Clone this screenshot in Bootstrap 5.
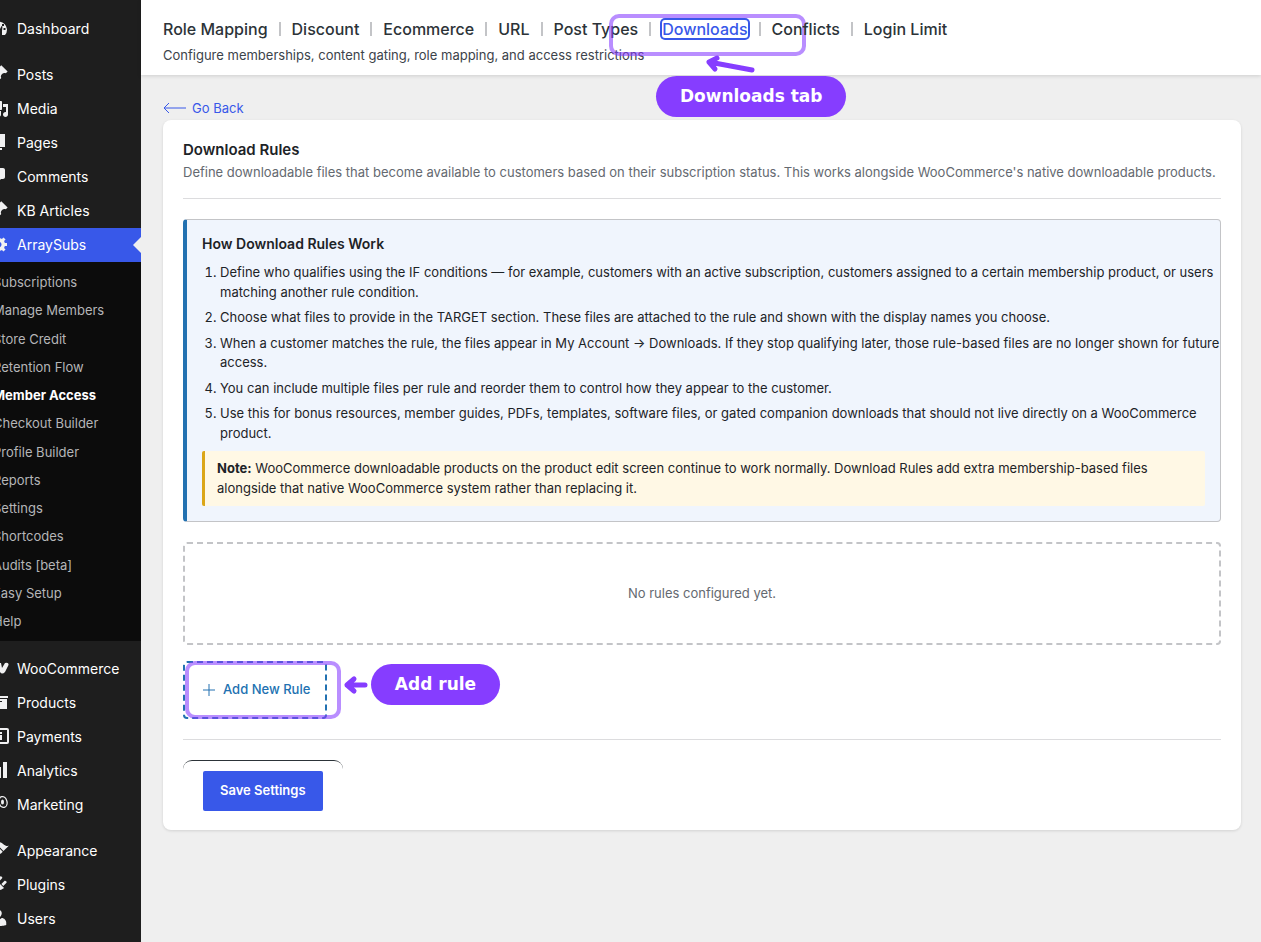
<!DOCTYPE html>
<html lang="en">
<head>
<meta charset="utf-8">
<meta name="viewport" content="width=device-width, initial-scale=1">
<title>Download Rules</title>
<link href="https://cdn.jsdelivr.net/npm/bootstrap@5.3.0/dist/css/bootstrap.min.css" rel="stylesheet">
<style>
body{font-family:Inter,"Liberation Sans",sans-serif;font-size:13px;line-height:1.5;background:#efefef;color:#1d2327}
a{text-decoration:none}
.admin-menu{width:141px;background:#1e1e1e;overflow:hidden}
.menu-inner{margin-left:-19px;padding-top:12px}
.menu-link{display:flex;align-items:center;gap:8px;height:34px;padding:0 0 2px 8px;font-size:14px;color:#fff;white-space:nowrap}
.menu-link svg{width:20px;height:20px;fill:#f0f0f1;flex:none}
.menu-group{margin-bottom:12px}
.menu-link.current{background:#3858e9;position:relative}
.menu-link.current::after{content:"";position:absolute;right:0;top:9px;border:8px solid transparent;border-right-color:#efefef;border-left:0}
.submenu{background:#0c0c0c;min-height:379px;padding:6px 12px;margin-bottom:11px}
.submenu a{color:#b5b6b8;line-height:28px;height:28px;white-space:nowrap}
.submenu a.on{color:#fff;font-weight:700}
.topbar{background:#fff;height:75px;padding:18px 22px 0;box-shadow:0 1px 4px rgba(0,0,0,.14)}
.tabs a{color:#2c3338;font-size:16px;line-height:22px;font-weight:500}
.tabs li{display:flex;align-items:center;position:relative}
.tabs li+li::before{content:"";width:2px;height:14px;background:#c3c4c7;margin:0 11px}
.tabs a.on{color:#3858e9;border-radius:3px;box-shadow:0 0 0 2px #3858e9;line-height:18px}
.subtitle{color:#3c434a;margin-top:6px}
.page-body{padding:23px 20px 20px 22px}
.back{color:#3858e9;line-height:20px;gap:5px}
.panel{background:#fff;border-radius:8px;padding:20px 20px 19px;box-shadow:0 1px 3px rgba(0,0,0,.12)}
.panel h1{font-size:15px;line-height:20px;font-weight:600;margin:0 0 3px}
.desc{color:#646970;margin-bottom:16px}
.rule-line{border-top:1px solid #dcdcde;margin:20px 0}
.info{background:#f0f5fd;border:1px solid #c3c4c7;border-left:4px solid #2271b1;border-radius:4px;padding:14px 0 15px 15px}
.info h2{font-size:14px;line-height:20px;font-weight:600;margin:0 0 9px}
.info ol{margin:0 0 8px;padding-left:18px}
.info li+li{margin-top:6px}
.note{background:#fff8e5;border-left:3px solid #dba617;border-radius:2px;padding:8px 12px;margin-right:15px}
.empty{border:2px dashed #c3c4c7;border-radius:4px;height:103px;color:#646970;margin:20px 0 16px}
.add-btn{width:144px;height:58px;border:2px dashed #2271b1;border-radius:4px;background:#fff;color:#2271b1;font-weight:500;padding:0 0 1px 18px;gap:8px;white-space:nowrap}
.save-bar{border-top:1px solid #2c3338;border-radius:9px;padding:10px 20px 0}
.save-btn{height:40px;padding:0 17px;background:#3858e9;border:0;border-radius:2px;color:#fff;font-weight:600;font-size:13px}
.hl{position:absolute;border:4px solid rgba(134,61,255,.58);border-radius:10px;pointer-events:none}
.callout{position:absolute;background:#863dff;color:#fff;border-radius:21px;height:41px;font:700 17px/41px "DejaVu Sans",sans-serif;text-align:center;white-space:nowrap}
.arrow{position:absolute;fill:none;stroke:#863dff;stroke-width:5;stroke-linecap:round;stroke-linejoin:round}
.hl-tab{left:-29px;top:-4px;width:197px;height:42px}
.arrow-tab{left:62px;top:32px}
.callout-tab{left:18px;top:58px;width:190px;z-index:2}
.hl-add{left:2px;top:0;width:156px;height:58px}
.arrow-add{left:158px;top:12px}
.callout-add{left:188px;top:3px;width:129px}
</style>
</head>
<body>
<div class="d-flex min-vh-100">
<nav class="admin-menu flex-shrink-0" aria-label="Admin menu">
<div class="menu-inner">
<div class="menu-group">
<a class="menu-link" href="#"><svg viewBox="0 0 20 20"><path fill-rule="evenodd" d="M4 17a8 8 0 1 1 12 0zM9 5h2v2H9zM13 6h2v2h-2zM14.500 10h2v2h-2zM10 13l2.500-5 1 .5L13 13v4h-2z"/></svg>Dashboard</a>
</div>
<div>
<a class="menu-link" href="#"><svg viewBox="0 0 20 20"><path id="pin" d="M10.440 3.020l1.820-1.820 6.360 6.350-1.830 1.820c-1.050-.68-2.480-.57-3.410.36l-.75.75c-.92.93-1.040 2.350-.35 3.410l-1.830 1.820-2.410-2.410-2.800 2.790c-.42.42-3.380 2.710-3.800 2.290s1.860-3.390 2.280-3.810l2.790-2.790L4.100 9.360l1.830-1.820c1.050.69 2.480.57 3.400-.36l.75-.75c.93-.92 1.050-2.350.36-3.410z"/></svg>Posts</a>
<a class="menu-link" href="#"><svg viewBox="0 0 20 20"><path d="M13 11V4c0-.55-.45-1-1-1h-1.670L9 1H5L3.670 3H2c-.55 0-1 .45-1 1v7c0 .55.45 1 1 1h10c.55 0 1-.45 1-1zM14 6h5v10.500c0 1.380-1.120 2.500-2.500 2.500S14 17.880 14 16.500s1.120-2.500 2.500-2.500c.17 0 .34.02.5.05V9h-3V6zm-4 8.050V13h2v3.500c0 1.380-1.120 2.500-2.500 2.500S7 17.880 7 16.500 8.120 14 9.500 14c.17 0 .34.02.5.05z"/></svg>Media</a>
<a class="menu-link" href="#"><svg viewBox="0 0 20 20"><path d="M6 15V2h10v13H6zm-1 1h8v2H3V5h2v11z"/></svg>Pages</a>
<a class="menu-link" href="#"><svg viewBox="0 0 20 20"><path d="M5 2h9c1.100 0 2 .9 2 2v7c0 1.100-.9 2-2 2h-2l-5 5v-5H5c-1.100 0-2-.9-2-2V4c0-1.100.9-2 2-2z"/></svg>Comments</a>
<a class="menu-link" href="#"><svg viewBox="0 0 20 20"><use href="#pin"/></svg>KB Articles</a>
<a class="menu-link current" href="#"><svg viewBox="0 0 20 20"><path d="M18 12h-2.180c-.17.7-.44 1.350-.81 1.930l1.540 1.540-2.100 2.100-1.540-1.540c-.58.36-1.230.63-1.910.79V19H8v-2.180c-.68-.16-1.330-.43-1.910-.79l-1.540 1.540-2.120-2.120 1.540-1.540c-.36-.58-.63-1.230-.79-1.910H1V9.030h2.170c.16-.7.44-1.350.8-1.940L2.430 5.550l2.100-2.100 1.540 1.540c.58-.37 1.240-.64 1.930-.81V2h3v2.180c.68.16 1.330.43 1.910.79l1.540-1.540 2.120 2.120-1.540 1.540c.36.59.64 1.240.8 1.940H18V12zm-8.500 1.500c1.660 0 3-1.340 3-3s-1.340-3-3-3-3 1.340-3 3 1.340 3 3 3z"/></svg>ArraySubs</a>
</div>
<div class="submenu d-flex flex-column justify-content-between">
<a href="#">Subscriptions</a><a href="#">Manage Members</a><a href="#">Store Credit</a><a href="#">Retention Flow</a><a class="on" href="#">Member Access</a><a href="#">Checkout Builder</a><a href="#">Profile Builder</a><a href="#">Reports</a><a href="#">Settings</a><a href="#">Shortcodes</a><a href="#">Audits [beta]</a><a href="#">Easy Setup</a><a href="#">Help</a>
</div>
<div class="menu-group">
<a class="menu-link" href="#"><svg viewBox="0 0 20 20"><path d="M3 5h3l1 6 3-6h2l1 5 3-5q4-1 3.500 2L16 14q-3 3-5 0l-1-3-2 3q-2 3-4 0z"/></svg>WooCommerce</a>
<a class="menu-link" href="#"><svg viewBox="0 0 20 20"><path d="M19 4v2H1V4h18zM2 7h16v10H2V7zm11 3V9H7v1h6z"/></svg>Products</a>
<a class="menu-link" href="#"><svg viewBox="0 0 20 20"><path fill-rule="evenodd" d="M3 2h15q2 0 2 2v12q0 2-2 2H3q-2 0-2-2V4q0-2 2-2zm0 2v12h15V4zM9 6h4v2h-2v1h2v5H9v-2h2v-1H9z"/></svg>Payments</a>
<a class="menu-link" href="#"><svg viewBox="0 0 20 20"><path d="M18 18V2h-4v16h4zm-6 0V7H8v11h4zm-6 0v-8H2v8h4z"/></svg>Analytics</a>
<a class="menu-link" href="#"><svg viewBox="0 0 20 20"><path d="M2 8l9-5v11l-9-3z"/><ellipse cx="14" cy="8" rx="4" ry="5.500" transform="rotate(-14 14 8)" fill="none" stroke="#f0f0f1" stroke-width="1.300"/><ellipse cx="13.500" cy="8" rx="1.500" ry="2.500"/></svg>Marketing</a>
</div>
<div>
<a class="menu-link" href="#"><svg viewBox="0 0 20 20"><path d="M14.480 11.060L7.410 3.990l1.500-1.500c.5-.56 2.300-.47 3.510.32 1.210.8 1.430 1.280 2.910 2.100 1.180.64 2.450 1.260 4.450.85zm-.71.71L6.700 4.700 4.930 6.470c-.39.39-.39 1.020 0 1.410l1.060 1.060c.39.39.39 1.030 0 1.420-.6.6-1.430 1.110-2.210 1.690-.35.26-.7.53-1.010.84C1.430 14.230.4 16.080 1.400 17.070c.99 1 2.840-.03 4.180-1.360.31-.31.58-.66.85-1.020.57-.78 1.080-1.610 1.690-2.210.39-.39 1.020-.39 1.410 0l1.060 1.060c.39.39 1.020.39 1.410 0z"/></svg>Appearance</a>
<a class="menu-link" href="#"><svg viewBox="0 0 20 20"><path d="M13.110 4.360L9.870 7.600 8 5.730l3.240-3.240c.35-.34 1.050-.2 1.560.32.52.51.66 1.210.31 1.550zm-8 1.770l.91-1.120 9.010 9.010-1.190.84c-.71.71-2.630 1.160-3.820 1.160H6.140L4.900 17.260c-.59.59-1.540.59-2.120 0-.59-.58-.59-1.530 0-2.120l1.240-1.240v-3.880c0-1.130.4-3.190 1.090-3.890zm7.260 3.970l3.240-3.240c.34-.35 1.040-.21 1.550.31.52.51.66 1.210.31 1.550l-3.240 3.250z"/></svg>Plugins</a>
<a class="menu-link" href="#"><svg viewBox="0 0 20 20"><path d="M10 9.250c-2.270 0-2.730-3.440-2.730-3.440C7 4.020 7.820 2 9.970 2c2.160 0 2.980 2.020 2.710 3.810 0 0-.41 3.440-2.680 3.440zm0 2.570L12.720 10c2.390 0 4.520 2.330 4.520 4.530v2.490s-3.650 1.130-7.240 1.130c-3.650 0-7.240-1.130-7.240-1.130v-2.490c0-2.250 1.940-4.480 4.470-4.480z"/></svg>Users</a>
</div>
</div>
</nav>
<div class="flex-grow-1">
<header class="topbar">
<ul class="tabs list-unstyled d-flex m-0 text-nowrap">
<li><a href="#">Role Mapping</a></li><li><a href="#">Discount</a></li><li><a href="#">Ecommerce</a></li><li><a href="#">URL</a></li><li><a href="#">Post Types</a></li>
<li><a class="on" href="#">Downloads</a>
<span class="hl hl-tab"></span>
<svg class="arrow arrow-tab" width="60" height="26" viewBox="0 0 60 26"><path d="M52 20L9 12M17 8l-8 4 6 7"/></svg>
<span class="callout callout-tab">Downloads tab</span></li>
<li><a href="#">Conflicts</a></li><li><a href="#">Login Limit</a></li>
</ul>
<div class="subtitle">Configure memberships, content gating, role mapping, and access restrictions</div>
</header>
<main class="page-body">
<a class="back d-inline-flex align-items-center" href="#"><svg width="24" height="12" viewBox="0 0 24 12" fill="none" stroke="#3858e9"><path d="M6 1L1 6l5 5M1 6h22"/></svg>Go Back</a>
<section class="panel">
<h1>Download Rules</h1>
<div class="desc">Define downloadable files that become available to customers based on their subscription status. This works alongside WooCommerce's native downloadable products.</div>
<div class="rule-line mt-0"></div>
<div class="info">
<h2>How Download Rules Work</h2>
<ol>
<li>Define who qualifies using the IF conditions — for example, customers with an active subscription, customers assigned to a certain membership product, or users matching another rule condition.</li>
<li>Choose what files to provide in the TARGET section. These files are attached to the rule and shown with the display names you choose.</li>
<li>When a customer matches the rule, the files appear in My Account → Downloads. If they stop qualifying later, those rule-based files are no longer shown for future access.</li>
<li>You can include multiple files per rule and reorder them to control how they appear to the customer.</li>
<li>Use this for bonus resources, member guides, PDFs, templates, software files, or gated companion downloads that should not live directly on a WooCommerce product.</li>
</ol>
<div class="note"><strong>Note:</strong> WooCommerce downloadable products on the product edit screen continue to work normally. Download Rules add extra membership-based files alongside that native WooCommerce system rather than replacing it.</div>
</div>
<div class="empty d-flex align-items-center justify-content-center">No rules configured yet.</div>
<div class="position-relative">
<button class="add-btn d-flex align-items-center" type="button"><svg width="12" height="12" viewBox="0 0 12 12" stroke="#2271b1"><path d="M6 0v12M0 6h12"/></svg>Add New Rule</button>
<span class="hl hl-add"></span>
<svg class="arrow arrow-add" width="30" height="24" viewBox="0 0 30 24"><path d="M24 12H6M13 6l-7 6 7 6"/></svg>
<span class="callout callout-add">Add rule</span>
</div>
<div class="rule-line"></div>
<div class="save-bar d-inline-flex">
<button class="save-btn" type="button">Save Settings</button>
</div>
</section>
</main>
</div>
</div>
<script src="https://cdn.jsdelivr.net/npm/bootstrap@5.3.0/dist/js/bootstrap.bundle.min.js"></script>
</body>
</html>
